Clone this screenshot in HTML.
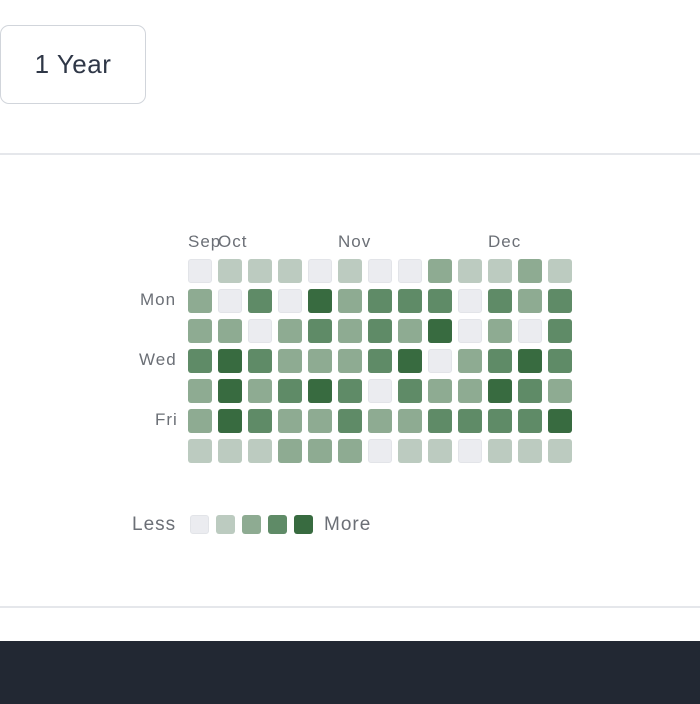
<!DOCTYPE html>
<html><head><style>
body{margin:0;width:700px;height:704px;background:#fff;font-family:"Liberation Sans",sans-serif;position:relative;overflow:hidden}
.btn{position:absolute;left:0;top:25px;width:146px;height:79px;border:1.5px solid #d1d5db;border-radius:9px;box-sizing:border-box;display:flex;align-items:center;justify-content:center;font-size:26px;color:#2f3747;letter-spacing:0.5px}
.hr{position:absolute;left:0;width:700px;height:2px;background:#e5e7eb}
.c{position:absolute;width:24px;height:24px;border-radius:3px;box-sizing:border-box}
.l0{background:#ebecf0;border:1px solid #e2e4e8}.l1{background:#bccbc0}.l2{background:#8eab92}.l3{background:#5f8b67}.l4{background:#386b40}
.t{position:absolute;color:#6b6f76;font-size:17px;letter-spacing:1px}
.foot{position:absolute;left:0;top:641px;width:700px;height:63px;background:#222833}
</style></head><body>
<div class="btn">1 Year</div>
<div class="hr" style="top:153px"></div>
<div class="t" style="left:188px;top:232px">Sep</div>
<div class="t" style="left:218px;top:232px">Oct</div>
<div class="t" style="left:338px;top:232px">Nov</div>
<div class="t" style="left:488px;top:232px">Dec</div>
<div class="t" style="left:140px;top:290px">Mon</div>
<div class="t" style="left:139px;top:350px">Wed</div>
<div class="t" style="left:155px;top:410px">Fri</div>
<div id="g"></div>
<div class="t" style="left:132px;top:514px;font-size:19px">Less</div>
<div class="c l0" style="left:190px;top:515px;width:19px;height:19px"></div>
<div class="c l1" style="left:216px;top:515px;width:19px;height:19px"></div>
<div class="c l2" style="left:242px;top:515px;width:19px;height:19px"></div>
<div class="c l3" style="left:268px;top:515px;width:19px;height:19px"></div>
<div class="c l4" style="left:294px;top:515px;width:19px;height:19px"></div>
<div class="t" style="left:324px;top:514px;font-size:19px">More</div>
<div class="hr" style="top:606px"></div>
<div class="foot"></div>
<script>
var d=["0111010021121","2030423330323","2202323240203","3432223402343","2423430322432","2432232233334","1112220110111"];
var h="";for(var r=0;r<7;r++)for(var c=0;c<13;c++)h+='<div class="c l'+d[r][c]+'" style="left:'+(188+30*c)+'px;top:'+(259+30*r)+'px"></div>';
document.getElementById("g").innerHTML=h;
</script>
</body></html>
